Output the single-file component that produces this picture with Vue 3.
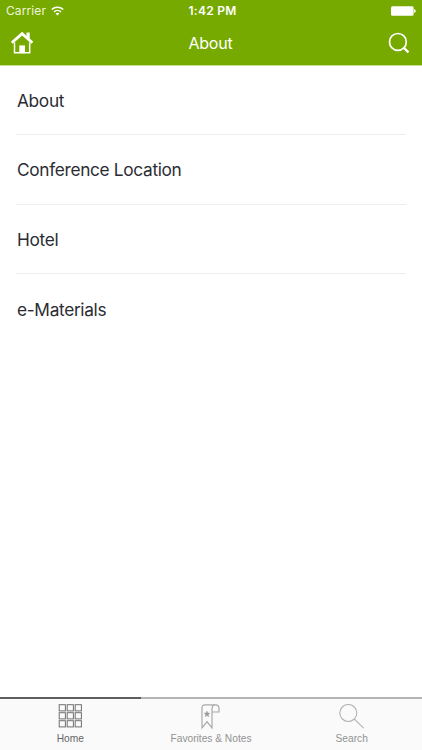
<template>
  <div class="screen">
    <header class="header">
      <div class="status-bar">
        <div class="carrier">
          <span>Carrier</span>
          <svg class="wifi" viewBox="0 0 13 10" fill="none" stroke="#fff">
            <path d="M.8 3.5C4 .5 9 .5 12.2 3.5" stroke-width="1.7" />
            <path d="M3 5.8c2-1.8 5-1.8 7 0" stroke-width="1.6" />
            <path d="M6.5 9.4 4.6 7.5c1.1-1 2.7-1 3.8 0z" fill="#fff" stroke="none" />
          </svg>
        </div>
        <div class="time">1:42 PM</div>
        <div class="battery">
          <svg viewBox="0 0 25 10">
            <rect width="22.6" height="9.6" y=".2" rx="1.5" fill="#fff" />
            <path d="M23.4 3.4c1.4.4 1.4 2.8 0 3.2z" fill="#fff" stroke="#fff" stroke-width=".6" />
          </svg>
        </div>
      </div>
      <div class="nav-bar">
        <button class="nav-btn" aria-label="Home">
          <svg width="24" height="24" viewBox="0 0 24 24">
            <path d="M4.5 11.5v10.2h15.2V11.5" fill="none" stroke="#fff" stroke-width="1.5" />
            <path d="M16.5 6V1.5h3.2v7z" fill="#fff" />
            <path d="M1.8 11.8 12.1 2.7l10.3 9.1" fill="none" stroke="#fff" stroke-width="2.8" />
            <path d="M9.3 14.4H15v7.8H9.3z" fill="#fff" />
          </svg>
        </button>
        <h1 class="title">About</h1>
        <button class="nav-btn nav-btn--right" aria-label="Search">
          <svg width="22" height="22" viewBox="0 0 22 22" fill="none" stroke="#fff">
            <circle cx="9.9" cy="9.9" r="8.4" stroke-width="1.7" />
            <path d="m15.9 15.9 4.6 4.5" stroke-width="2.2" />
          </svg>
        </button>
      </div>
    </header>

    <ul class="list">
      <li v-for="item in items" :key="item" class="list-item">
        <span>{{ item }}</span>
      </li>
    </ul>

    <nav class="tab-bar">
      <a
        v-for="tab in tabs"
        :key="tab.id"
        class="tab"
        :class="{ active: current === tab.id }"
        @click="current = tab.id"
      >
        <svg v-if="tab.id === 'home'" width="24" height="24" viewBox="0 0 24 24" fill="none" stroke="#6f6f6f">
          <template v-for="row in 3" :key="row">
            <rect v-for="col in 3" :key="col" :x="col * 8 - 6.8" :y="row * 8 - 7.3" width="6.2" height="6.2" />
          </template>
        </svg>
        <svg v-else-if="tab.id === 'favorites'" width="20" height="26" viewBox="0 0 20 26" fill="none" stroke="#aaa" stroke-width="1.2">
          <path d="M14 .8H4.3Q1 .8 1 4v19.8l5-6 5 6V5Q11 .8 14.500.8 18 .8 18 4.500V8h-7" />
          <path d="m6 7.100.85 1.900 2.050.2-1.550 1.400.45 2.050L6 11.600l-1.800 1.050.45-2.050L3.100 9.200l2.050-.2z" fill="#999" stroke="#999" stroke-width=".4" />
        </svg>
        <svg v-else width="26" height="26" viewBox="0 0 26 26" fill="none" stroke="#b2b2b2" stroke-width="1.1">
          <circle cx="9.3" cy="9" r="8.5" />
          <path d="m15.4 15.1 9.2 9" />
        </svg>
        <span class="tab-label">{{ tab.label }}</span>
      </a>
    </nav>
  </div>
</template>

<script setup>
import { ref } from 'vue'

const items = ['About', 'Conference Location', 'Hotel', 'e-Materials']

const tabs = [
  { id: 'home', label: 'Home' },
  { id: 'favorites', label: 'Favorites & Notes' },
  { id: 'search', label: 'Search' }
]

const current = ref('home')
</script>

<style>
body {
  margin: 0;
  background: #fff;
}
</style>

<style scoped>
.screen {
  display: flex;
  flex-direction: column;
  height: 100vh;
  overflow: hidden;
  background: #fff;
  font-family: Inter, "Liberation Sans", sans-serif;
}

.header {
  box-sizing: border-box;
  flex: none;
  height: 66px;
  background: #77aa00;
  border-bottom: 1px solid #c5dc92;
  color: #fff;
}

.status-bar {
  display: grid;
  grid-template-columns: 1fr auto 1fr;
  align-items: center;
  height: 22px;
  padding: 0 6px;
  font-size: 12px;
  line-height: 22px;
}

.carrier {
  display: flex;
  align-items: center;
  gap: 5px;
  color: #eef6dc;
  letter-spacing: 0.1px;
}

.wifi {
  width: 13px;
  height: 10px;
}

.time {
  padding-left: 3px;
  font-weight: 600;
  letter-spacing: 0.25px;
}

.battery {
  display: flex;
  justify-content: flex-end;
}

.battery svg {
  width: 25px;
  height: 10px;
}

.nav-bar {
  display: grid;
  grid-template-columns: 1fr auto 1fr;
  align-items: center;
  height: 42px;
  padding: 0 12px 0 10px;
}

.nav-btn {
  display: flex;
  padding: 0;
  border: 0;
  background: none;
}

.nav-btn--right {
  justify-self: end;
}

.title {
  margin: 0;
  padding-left: 1px;
  font-size: 16px;
  font-weight: 400;
  letter-spacing: -0.2px;
  line-height: 20px;
}

.list {
  flex: 1;
  margin: 0;
  padding: 0 16px;
  list-style: none;
}

.list-item {
  box-sizing: border-box;
  display: flex;
  align-items: center;
  height: 69.5px;
  padding: 2px 0 0 1px;
  border-bottom: 1px solid #eee;
  color: #2b2c33;
  font-size: 17.3px;
  letter-spacing: -0.33px;
  line-height: 24px;
}

.list-item:first-child {
  height: 69px;
}

.list-item:last-child {
  border-bottom: 0;
}

.tab-bar {
  box-sizing: border-box;
  display: flex;
  flex: none;
  height: 53px;
  background: #fafafa;
}

.tab {
  box-sizing: border-box;
  display: flex;
  flex: 1;
  flex-direction: column;
  align-items: center;
  border-top: 2px solid #b4b4b4;
  color: #929292;
  font-family: "Liberation Sans", Arial, sans-serif;
  font-size: 10.2px;
}

.tab svg {
  flex: none;
  margin-top: 5px;
}

.tab.active {
  border-top-color: #5e5e5e;
  color: #666;
}

.tab-label {
  margin-top: auto;
  margin-bottom: 4px;
  line-height: 14px;
  white-space: nowrap;
}
</style>
